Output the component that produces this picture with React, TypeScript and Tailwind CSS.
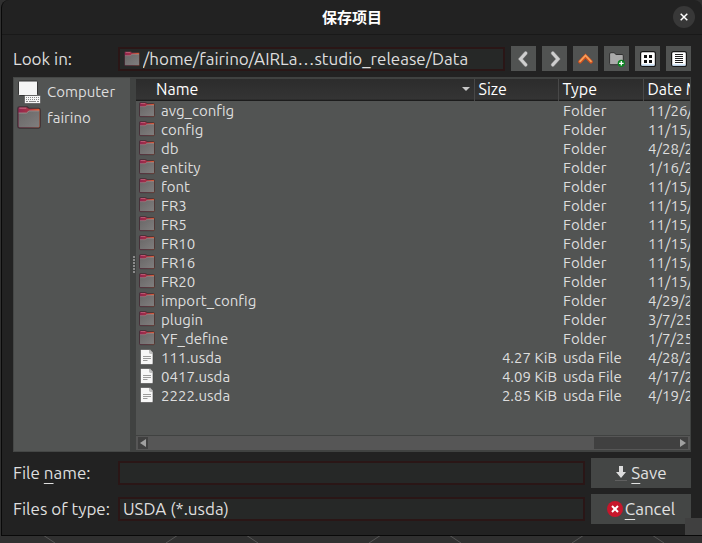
import type { ReactNode } from "react";

type Entry = { name: string; size: string; type: string; date: string };

const folder = (name: string, date: string): Entry => ({ name, size: "", type: "Folder", date });
const file = (name: string, size: string, date: string): Entry => ({ name, size, type: "usda File", date });

const entries: Entry[] = [
  folder("avg_config", "11/26/24"),
  folder("config", "11/15/24"),
  folder("db", "4/28/25"),
  folder("entity", "1/16/25"),
  folder("font", "11/15/24"),
  folder("FR3", "11/15/24"),
  folder("FR5", "11/15/24"),
  folder("FR10", "11/15/24"),
  folder("FR16", "11/15/24"),
  folder("FR20", "11/15/24"),
  folder("import_config", "4/29/25"),
  folder("plugin", "3/7/25"),
  folder("YF_define", "1/7/25"),
  file("111.usda", "4.27 KiB", "4/28/25"),
  file("0417.usda", "4.09 KiB", "4/17/25"),
  file("2222.usda", "2.85 KiB", "4/19/25"),
];

function FolderIcon({ className }: { className: string }) {
  return (
    <svg viewBox="0 0 16 16" className={className} aria-hidden="true">
      <defs>
        <linearGradient id="tab" x1="0" x2="1">
          <stop offset="0" stopColor="#8f2450" />
          <stop offset="0.5" stopColor="#a83244" />
          <stop offset="1" stopColor="#e8602c" />
        </linearGradient>
        <linearGradient id="body" x1="0" y1="0" x2="1" y2="1">
          <stop offset="0" stopColor="#696767" />
          <stop offset="1" stopColor="#807e7e" />
        </linearGradient>
      </defs>
      <path d="M.5 1.700Q.5.500 1.700.5h5L8 1.500h6.300q1.200 0 1.200 1.200v10.800q0 1.200-1.200 1.200H1.700Q.5 14.700.5 13.500z" fill="url(#tab)" />
      <path d="M1 4.700h5.300L8 3.300h7v10.100q0 .9-.9.9H1.900q-.9 0-.9-.9z" fill="url(#body)" />
      <path d="M1 4.700h5.300L8 3.300h7" fill="none" stroke="#9c8e8e" strokeWidth=".6" />
      <path d="M1.600 1.400h4.600" stroke="#c8748a" strokeWidth=".7" />
      <path d="M.5 1.700Q.5.500 1.700.5h5L8 1.500h6.300q1.200 0 1.200 1.200v10.800q0 1.200-1.200 1.200H1.700Q.5 14.700.5 13.500z" fill="none" stroke="#3b3034" strokeWidth=".8" />
    </svg>
  );
}

function FileIcon() {
  return (
    <svg viewBox="0 0 16 16" className="size-4" aria-hidden="true">
      <path d="M2.500.5h8.500l3 3v11q0 1-1 1H2.500q-1 0-1-1v-13q0-1 1-1z" fill="#f7f7f7" stroke="#454545" strokeWidth=".6" />
      <path d="M10.500.8v3q0 .6.6.6H14z" fill="#c8c8c8" stroke="#8d8d8d" strokeWidth=".4" />
      <path d="M4 7.500h8M4 9.500h8M4 11.500h4.500" stroke="#909090" strokeWidth=".9" />
    </svg>
  );
}

function ComputerIcon() {
  return (
    <svg viewBox="0 0 24 24" className="size-6" aria-hidden="true">
      <rect x="1.500" y="1" width="19" height="14.500" rx="1" fill="#f5f5f5" stroke="#343434" />
      <path d="M7 16h7v2H7z" fill="#3c3c3c" />
      <rect x="7.500" y="15.500" width="16" height="8" rx=".8" fill="#f4f4f4" stroke="#444" strokeWidth=".6" />
      <path d="M9 17.500h13M9 19.500h13" stroke="#888" strokeWidth="1" strokeDasharray="1 1" />
      <path d="M9 21.500h2M12 21.500h7M20 21.500h2" stroke="#888" />
    </svg>
  );
}

function ToolButton({ label, children }: { label: string; children: ReactNode }) {
  return (
    <button type="button" aria-label={label} className="flex size-[25px] items-center justify-center bg-[#515352]">
      <svg viewBox="0 0 16 16" className="size-4" fill="none" aria-hidden="true">
        {children}
      </svg>
    </button>
  );
}

const field =
  "h-6 w-full min-w-0 appearance-none border-2 border-[#2a1616] bg-[#262827] text-[17px] leading-5 text-[#dedede] outline-none";
const action =
  "flex h-[30px] items-center justify-center bg-[#444645] text-[17px] leading-5 text-[#e2e2e2]";

export default function App() {
  return (
    <div className="relative flex h-screen min-h-[480px] flex-col bg-[#303030] pb-[7px] pl-px font-['Ubuntu','Noto_Sans','Noto_Sans_CJK_SC',sans-serif] text-[17px] leading-5 text-[#dedede]">
      <svg className="absolute bottom-0 left-0 h-2 w-full" aria-hidden="true">
        <path d="M43 0l12 8M178 0l-12 8M246 0l12 8M381 0l-12 8M449 0l12 8M584 0l-12 8M652 0l12 8" stroke="#555" fill="none" />
      </svg>

      <main className="relative flex min-h-0 flex-1 flex-col rounded-t-lg border-b border-l border-[#090909] bg-[#222222]">
        <header className="grid h-[35px] shrink-0 grid-cols-[1fr_auto_1fr] items-center border-b border-[#191919]">
          <h1 className="col-start-2 pt-0.5 text-[15px] leading-5 font-bold text-white">保存项目</h1>
          <button type="button" aria-label="Close" className="mr-[7px] flex size-[22px] items-center justify-center justify-self-end rounded-full bg-[#383838]">
            <svg viewBox="0 0 8 8" className="size-2" aria-hidden="true">
              <path d="M.7.7l6.600 6.600M7.300.7L.7 7.300" stroke="#fff" strokeWidth="1.500" />
            </svg>
          </button>
        </header>

        <div className="flex min-h-0 flex-1 flex-col gap-1.5 p-[11px]">
          <div className="flex items-center">
            <label htmlFor="look-in" className="w-[105px] shrink-0">Look in:</label>
            <div className="relative flex min-w-0 flex-1">
              <FolderIcon className="pointer-events-none absolute top-1 left-1.5 size-4" />
              <select id="look-in" className={`${field} pl-[23px]`}>
                <option>/home/fairino/AIRLa…studio_release/Data</option>
              </select>
            </div>
            <div className="ml-1.5 flex gap-1.5">
              <ToolButton label="Back">
                <path d="M9.700 2.200L4.500 8l5.200 5.800" stroke="#7c7c7c" strokeWidth="4" strokeLinecap="round" />
                <path d="M9.700 2.200L4.500 8l5.200 5.800" stroke="#cfcfcf" strokeWidth="3" strokeLinecap="round" />
              </ToolButton>
              <ToolButton label="Forward">
                <path d="M5.800 2.200L11 8l-5.200 5.800" stroke="#7c7c7c" strokeWidth="4" strokeLinecap="round" />
                <path d="M5.800 2.200L11 8l-5.200 5.800" stroke="#cfcfcf" strokeWidth="3" strokeLinecap="round" />
              </ToolButton>
              <ToolButton label="Parent directory">
                <path d="M2 10.800L7.500 5l5.500 5.800" stroke="#d4501c" strokeWidth="3.600" strokeLinecap="round" />
                <path d="M2 10.300L7.500 4.500l5.500 5.800" stroke="#f5a25c" strokeWidth="1.700" strokeLinecap="round" />
              </ToolButton>
              <ToolButton label="Create new folder">
                <path d="M.6 3q0-1.300 1.300-1.300h3.200L7.100 3.500h6q1.200 0 1.200 1.200v7.800q0 1.200-1.200 1.200H1.800Q.6 13.700.6 12.500z" fill="#aaa" stroke="#303030" />
                <circle cx="12.300" cy="12.300" r="3.600" fill="#0b8420" />
                <path d="M12.300 10v4.600M10 12.300h4.600" stroke="#fff" strokeWidth="1.300" />
              </ToolButton>
              <ToolButton label="List view">
                <rect x=".6" y=".6" width="14.800" height="14.800" rx="2" fill="#fff" stroke="#161616" strokeWidth="1.200" />
                <path d="M1.500 14h13" stroke="#b8d7f5" strokeWidth="1.200" />
                <path d="M4 4h3v3H4zM9 4h3v3H9zM4 9h3v3H4zM9 9h3v3H9z" fill="#111" />
              </ToolButton>
              <ToolButton label="Detail view">
                <rect x=".6" y=".6" width="14.800" height="14.800" rx="2" fill="#fff" stroke="#161616" strokeWidth="1.200" />
                <path d="M1.500 14h13" stroke="#b8d7f5" strokeWidth="1.200" />
                <path d="M4 3.500h8M4 5.500h8M4 7.500h8M4 9.500h8M4 11.500h8" stroke="#222" />
              </ToolButton>
            </div>
          </div>

          <div className="flex min-h-0 flex-1 bg-[#404241]">
            <nav aria-label="Places" className="w-[117px] shrink-0 border border-r-0 border-[#454746] bg-[#525453] px-[3px] pt-px text-[15px] leading-5">
              <a href="#computer" className="flex h-[26px] items-center gap-1.5">
                <ComputerIcon />
                Computer
              </a>
              <a href="#fairino" className="flex h-[26px] items-center gap-1.5">
                <FolderIcon className="size-6" />
                fairino
              </a>
            </nav>
            <div className="flex w-1.5 items-center justify-end" aria-hidden="true">
              <div className="mr-px flex flex-col gap-px">
                {[0, 1, 2, 3, 4, 5].map((n) => (
                  <i key={n} className="size-0.5 bg-[#8b8b8b]" />
                ))}
              </div>
            </div>

            <section aria-label="Files" className="flex min-w-0 flex-1 flex-col border-t-2 border-r border-[#404241] bg-[#525453]">
              <div className="min-h-0 flex-1 overflow-hidden">
                <table className="w-full table-fixed border-collapse text-left text-[15px] leading-[19px]">
                  <colgroup>
                    <col />
                    <col className="w-[84px]" />
                    <col className="w-[85px]" />
                    <col className="w-[47px]" />
                  </colgroup>
                  <thead>
                    <tr className="h-[21px] border-b border-[#1c1c1c] bg-linear-to-b from-[#2c2c2c] to-[#343434] text-base leading-5 whitespace-nowrap text-white">
                      <th className="border-r border-[#484848] p-0 pr-1 pl-5 font-normal">
                        <span className="flex items-center justify-between">
                          Name
                          <svg viewBox="0 0 8 4" className="h-1 w-2" aria-hidden="true">
                            <path d="M0 0h8L4 4z" fill="#c8c8c8" />
                          </svg>
                        </span>
                      </th>
                      <th className="border-r border-[#484848] p-0 pl-1 font-normal">Size</th>
                      <th className="border-r border-[#484848] p-0 pl-1 font-normal">Type</th>
                      <th className="overflow-hidden p-0 pl-1 font-normal">Date Modified</th>
                    </tr>
                  </thead>
                  <tbody>
                    {entries.map((e) => (
                      <tr key={e.name} className="h-[19px] whitespace-nowrap">
                        <td className="p-0 pl-[3px]">
                          <span className="flex h-[19px] items-center gap-1.5">
                            {e.type === "Folder" ? <FolderIcon className="size-4" /> : <FileIcon />}
                            {e.name}
                          </span>
                        </td>
                        <td className="p-0 pr-px text-right">{e.size}</td>
                        <td className="p-0 pl-[5px]">{e.type}</td>
                        <td className="overflow-hidden p-0 pl-[5px]">{e.date}</td>
                      </tr>
                    ))}
                  </tbody>
                </table>
              </div>
              <div className="flex h-[17px] shrink-0 border-t border-b-2 border-[#404241] bg-[#565656] px-0.5">
                <div className="my-px flex flex-1 bg-[#404040]">
                  <button type="button" aria-label="Scroll left" className="flex w-2.5 items-center justify-center">
                    <svg viewBox="0 0 6 8" className="h-2 w-1.5" aria-hidden="true">
                      <path d="M6 0v8L0 4z" fill="#a0a0a0" />
                    </svg>
                  </button>
                  <div className="w-[81%] bg-[#565656]" />
                  <button type="button" aria-label="Scroll right" className="ml-auto flex w-2.5 items-center justify-center">
                    <svg viewBox="0 0 6 8" className="h-2 w-1.5" aria-hidden="true">
                      <path d="M0 0v8l6-4z" fill="#a0a0a0" />
                    </svg>
                  </button>
                </div>
              </div>
            </section>
          </div>

          <form className="grid grid-cols-[105px_1fr_106px] items-center gap-y-1.5" onSubmit={(e) => e.preventDefault()}>
            <label htmlFor="file-name">
              File <span className="underline underline-offset-4">n</span>ame:
            </label>
            <input id="file-name" type="text" className={`${field} px-[3px]`} />
            <button type="submit" className={`${action} ml-1.5 gap-1`}>
              <svg viewBox="0 0 12 16" className="h-4 w-3" aria-hidden="true">
                <path d="M4 1h4v6h3l-5 6-5-6h3z" fill="#dcdcdc" />
                <path d="M0 15.500h12" stroke="#606060" />
              </svg>
              <span>
                <span className="underline underline-offset-4">S</span>ave
              </span>
            </button>
            <label htmlFor="file-type">Files of type:</label>
            <select id="file-type" className={`${field} px-[3px]`}>
              <option>USDA (*.usda)</option>
            </select>
            <button type="button" className={`${action} ml-1.5 gap-0.5`}>
              <svg viewBox="0 0 16 16" className="size-4" aria-hidden="true">
                <circle cx="8" cy="8" r="8" fill="#c7162b" />
                <path d="M5 5l6 6M11 5l-6 6" stroke="#fff" strokeWidth="2" />
              </svg>
              <span>
                <span className="underline underline-offset-4">C</span>ancel
              </span>
            </button>
          </form>
        </div>
        <div className="absolute right-0 bottom-0 h-[17px] w-[17px] bg-[#404040]" />
      </main>
    </div>
  );
}
